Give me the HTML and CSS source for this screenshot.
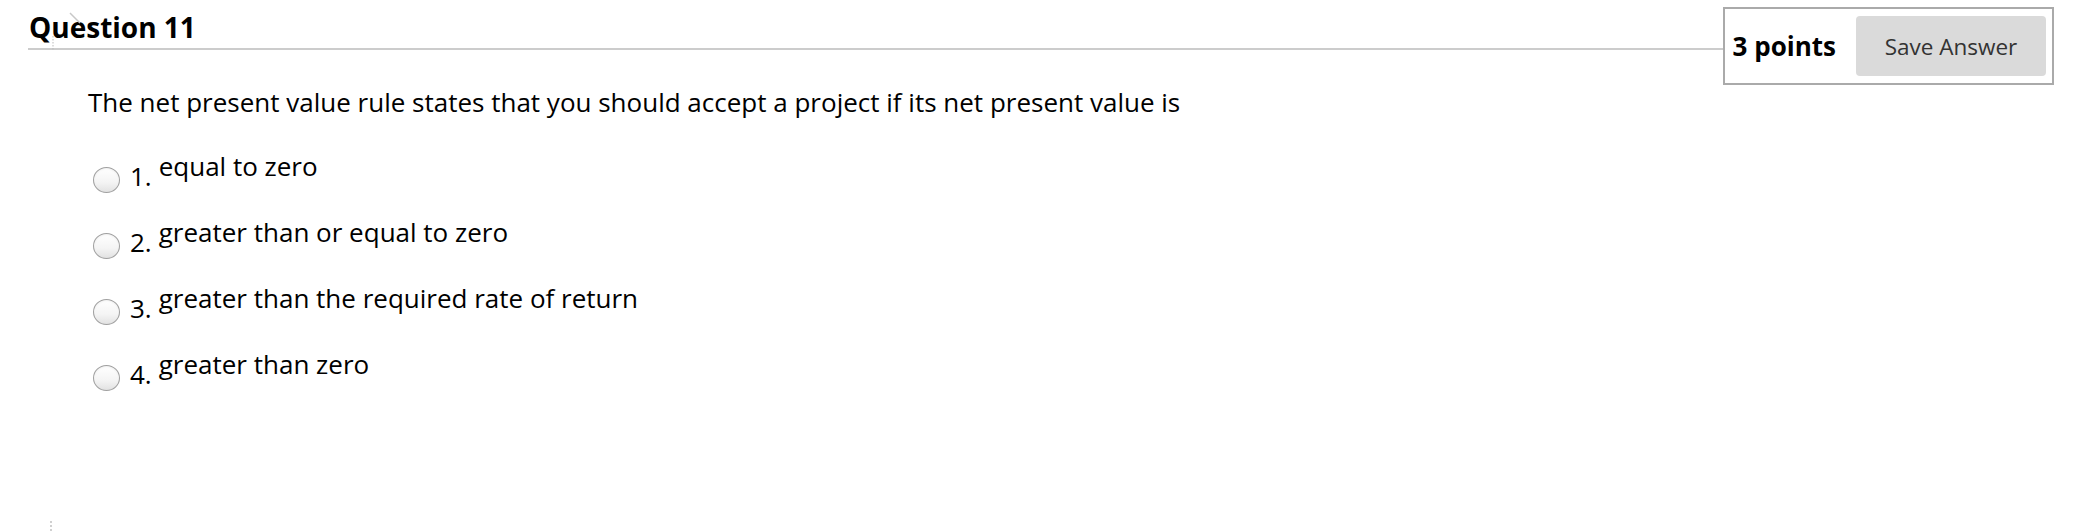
FILE: index.html
```html
<!DOCTYPE html>
<html lang="en">
<head>
<meta charset="utf-8">
<title>Question 11</title>
<link rel="stylesheet" href="styles.css">
</head>
<body>
<div class="page">
  <div class="header">
    <h2 class="title"><span class="title-text">Question 11</span></h2>
    <div class="points-box">
      <span class="points">3 points</span>
      <button class="save-btn" type="button">Save Answer</button>
    </div>
  </div>
  <div class="question-body">
    <p class="question-text">The net present value rule states that you should accept a project if its net present value is</p>
    <div class="options">
      <label class="option"><span class="radio"></span><span class="num">1.</span><span class="label">equal to zero</span></label>
      <label class="option"><span class="radio"></span><span class="num">2.</span><span class="label">greater than or equal to zero</span></label>
      <label class="option"><span class="radio"></span><span class="num">3.</span><span class="label">greater than the required rate of return</span></label>
      <label class="option"><span class="radio"></span><span class="num">4.</span><span class="label">greater than zero</span></label>
    </div>
  </div>
  <svg class="drag-mark" width="40" height="40" viewBox="0 0 40 40" aria-hidden="true">
    <line x1="20" y1="1" x2="30" y2="11" stroke="#c8c8c8" stroke-width="1.5"/>
    <line x1="3" y1="24" x2="3" y2="38" stroke="#bbbbbb" stroke-width="1" stroke-dasharray="1.5 1.5"/>
  </svg>
  <div class="grip"></div>
</div>
</body>
</html>
```
FILE: styles.css
```css
html, body {
  margin: 0;
  padding: 0;
  background: #ffffff;
}
body {
  font-family: "Open Sans", "Noto Sans", "Liberation Sans", sans-serif;
  color: #000;
  width: 2074px;
  height: 532px;
  overflow: hidden;
}
.page {
  position: relative;
  height: 532px;
}
.header {
  display: flex;
  align-items: flex-start;
  padding: 7px 20px 0 28px;
}
.title {
  flex: 1;
  margin: 0;
  border-bottom: 2px solid #cccccc;
  font-size: 28px;
  font-weight: 700;
  line-height: 30px;
  padding-top: 5px;
  height: 36px;
  box-sizing: content-box;
}
.title-text {
  display: inline-block;
  padding-left: 1px;
}
.points-box {
  display: flex;
  align-items: center;
  gap: 20px;
  border: 2px solid #aaaaaa;
  padding: 7px 6px 7px 8px;
  background: #fff;
}
.points {
  font-size: 26px;
  font-weight: 700;
  line-height: 30px;
}
.save-btn {
  font-family: inherit;
  font-size: 22.5px;
  color: #333;
  background: #dadada;
  border: none;
  border-radius: 4px;
  width: 190px;
  height: 60px;
  padding: 0;
}
.question-body {
  padding-left: 88px;
}
.question-text {
  margin: 0;
  padding-top: 2px;
  font-size: 26px;
  line-height: 30px;
}
.options {
  display: flex;
  flex-direction: column;
  padding-top: 32px;
  padding-left: 5px;
}
.option {
  display: flex;
  align-items: flex-start;
  height: 66px;
  font-size: 26px;
  line-height: 30px;
}
.radio {
  width: 27px;
  height: 26px;
  margin-top: 18px;
  border-radius: 50%;
  border: 1px solid #a0a0a0;
  background: linear-gradient(#ffffff 0%, #f4f4f4 60%, #e2e2e2 100%);
  box-shadow: inset 0 1px 2px rgba(0,0,0,0.06);
  box-sizing: border-box;
  flex: none;
}
.num {
  margin-left: 10px;
  margin-top: 12px;
}
.label {
  margin-left: 7px;
  margin-top: 2px;
}
.drag-mark {
  position: absolute;
  left: 50px;
  top: 12px;
}
.grip {
  position: absolute;
  left: 50px;
  top: 521px;
  width: 2px;
  height: 10px;
  background: repeating-linear-gradient(#d0d0d0 0 2px, transparent 2px 4px);
}
```
